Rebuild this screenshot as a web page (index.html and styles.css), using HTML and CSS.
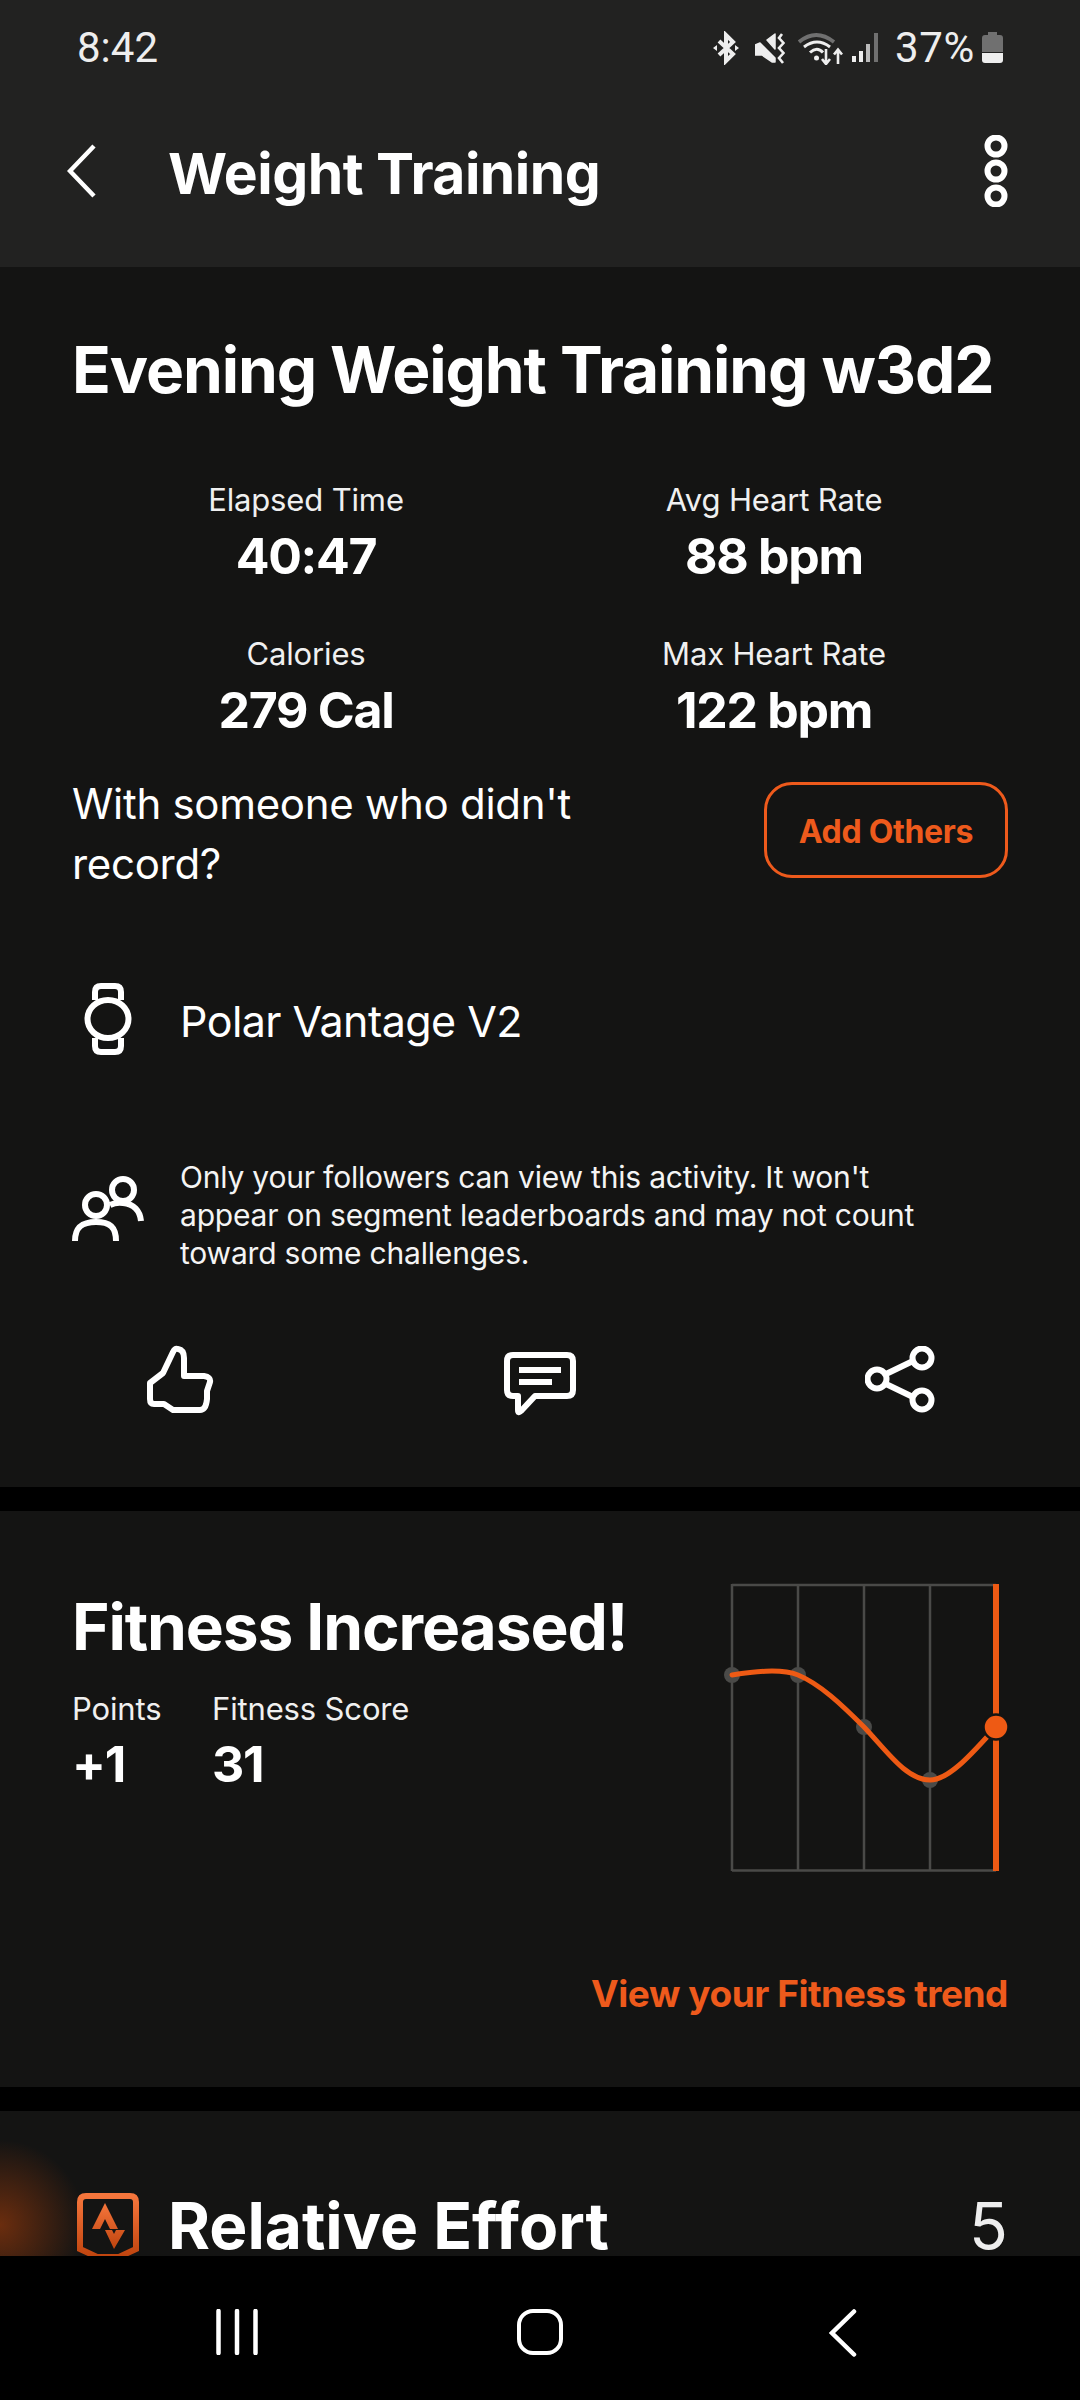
FILE: index.html
```html
<!DOCTYPE html>
<html lang="en">
<head>
<meta charset="utf-8">
<title>Weight Training</title>
<link rel="stylesheet" href="styles.css">
</head>
<body>
<div class="screen">
  <div class="scroll">
    <header class="appbar">
      <div class="status">
        <span class="clock">8:42</span>
        <div class="status-right">
          <svg class="si si-bt" width="26" height="34" viewBox="0 0 26 34"><path d="M6 10 L20 23 L13 30 V4 L20 11 L6 24" fill="none" stroke="#eee" stroke-width="4"/><path d="M0 17 L4 14 V20Z M26 17 L22 14 V20Z" fill="#eee"/></svg>
          <svg class="si si-mute" width="30" height="34" viewBox="0 0 30 34"><path d="M12 9 L20 3 V18Z M0 14 L5 12 L20 27 V31 H17 L7 24 H0Z" fill="#eee" stroke="#eee" stroke-width="1.5" stroke-linejoin="round"/><path d="M27 3 L24 7 L28.5 12 L24 17 L28.5 22 L24 27 L28 32" fill="none" stroke="#eee" stroke-width="2.6"/></svg>
          <svg class="si si-wifi" width="45" height="34" viewBox="0 0 45 34"><path d="M1 11 Q18 -3 36 11" fill="none" stroke="#707070" stroke-width="3.8"/><path d="M6 16 Q19 6 32 16 M12 21.5 Q19 15 25 21.5" fill="none" stroke="#eee" stroke-width="3"/><circle cx="18.5" cy="27" r="2.5" fill="#eee"/><path d="M28 18 V32 M24 28 L28 33 L32 28 M40 33 V19 M36 23.5 L40 18.5 L44 23.5" fill="none" stroke="#eee" stroke-width="2.6"/></svg>
          <svg class="si si-signal" width="27" height="34" viewBox="0 0 27 34"><rect x="0" y="25" width="4" height="6" fill="#eee"/><rect x="7" y="20" width="4" height="11" fill="#eee"/><rect x="14" y="13" width="4" height="18" fill="#bbb"/><rect x="22" y="2" width="4" height="29" fill="#707070"/></svg>
          <span class="batt-text">37%</span>
          <svg class="si si-batt" width="21" height="34" viewBox="0 0 21 34"><path d="M6 1 H15 V4 H18 Q21 4 21 7 V21 H0 V7 Q0 4 3 4 H6Z" fill="#707070"/><path d="M0 22 H21 V29 Q21 32 18 32 H3 Q0 32 0 29Z" fill="#eee"/></svg>
        </div>
      </div>
      <div class="titlebar">
        <svg class="back" width="29" height="54" viewBox="0 0 29 54"><path d="M27 2 L3 27 L27 52" fill="none" stroke="#fff" stroke-width="4.5"/></svg>
        <h1 class="app-title">Weight Training</h1>
        <svg class="more" width="24" height="72" viewBox="0 0 24 72"><g fill="none" stroke="#fff" stroke-width="6"><circle cx="12" cy="11" r="8.5"/><circle cx="12" cy="36" r="8.5"/><circle cx="12" cy="61" r="8.5"/></g></svg>
      </div>
    </header>

    <section class="card card-activity">
      <h2 class="big-title">Evening Weight Training w3d2</h2>
      <div class="stats">
        <div class="stat"><div class="label">Elapsed Time</div><div class="value">40:47</div></div>
        <div class="stat"><div class="label">Avg Heart Rate</div><div class="value">88 bpm</div></div>
        <div class="stat"><div class="label">Calories</div><div class="value">279 Cal</div></div>
        <div class="stat"><div class="label">Max Heart Rate</div><div class="value">122 bpm</div></div>
      </div>
      <div class="others">
        <p class="others-text">With someone who didn't<br>record?</p>
        <button class="others-btn">Add Others</button>
      </div>
      <div class="device">
        <div class="icon-col">
          <svg width="48" height="72" viewBox="0 0 48 72"><g fill="none" stroke="#fff" stroke-width="6"><ellipse cx="24" cy="36" rx="20.5" ry="19"/><path d="M11 17 V9 Q11 3 17 3 H31 Q37 3 37 9 V17"/><path d="M11 55 V63 Q11 69 17 69 H31 Q37 69 37 63 V55"/></g></svg>
        </div>
        <span class="device-name">Polar Vantage V2</span>
      </div>
      <div class="privacy">
        <div class="icon-col icon-col-people">
          <svg width="72" height="65" viewBox="0 0 72 65"><g fill="none" stroke="#fff" stroke-width="6"><circle cx="24" cy="29" r="11"/><circle cx="51" cy="14" r="11"/><path d="M3 65 C3 51 10 46 24 46 C38 46 44 51 44 65"/><path d="M38 29 Q44 26 51 27 C62 28 68 35 69 45"/></g></svg>
        </div>
        <p class="privacy-text">Only your followers can view this activity. It won't appear on segment leaderboards and may not count toward some challenges.</p>
      </div>
      <div class="actions">
        <svg width="68" height="70" viewBox="26 24 68 70"><path d="M30 62 L43 52 L53 31 Q55 27 58 28 Q64 29 64 37 V55 H84 Q91 56 90 61 L87 70 V78 Q86 89 80 89 H53 L44 83 H34 Q30 83 30 78Z" fill="none" stroke="#fff" stroke-width="6" stroke-linejoin="round"/></svg>
        <svg class="comment-icon" width="72" height="64" viewBox="0 0 72 64"><path d="M9 3 H63 Q69 3 69 9 V38 Q69 44 63 44 H31 L17 59 Q14 62 14 58 V44 H9 Q3 44 3 38 V9 Q3 3 9 3Z" fill="none" stroke="#fff" stroke-width="6" stroke-linejoin="round"/><rect x="15" y="15" width="42" height="6" fill="#fff"/><rect x="15" y="27" width="33" height="6" fill="#fff"/></svg>
        <svg width="70" height="67" viewBox="864 1347 70 67"><g fill="none" stroke="#fff" stroke-width="6"><circle cx="921" cy="1359" r="9.5"/><circle cx="921" cy="1401" r="9.5"/><circle cx="876" cy="1380" r="9.5"/><path d="M885 1375 L912 1362 M885 1385 L912 1398"/></g></svg>
      </div>
    </section>

    <section class="card card-fitness">
      <div class="fitness-top">
        <div class="fitness-left">
          <h2 class="big-title">Fitness Increased!</h2>
          <div class="fit-stats">
            <div><div class="label">Points</div><div class="value">+1</div></div>
            <div><div class="label">Fitness Score</div><div class="value">31</div></div>
          </div>
        </div>
        <svg class="chart" width="288" height="288" viewBox="720 1584 288 288">
          <g fill="none" stroke="#4a4a48" stroke-width="2.5">
            <path d="M732 1585 H996 M732 1870.5 H996 M732 1584 V1871 M798 1584 V1871 M864 1584 V1871 M930 1584 V1871"/>
          </g>
          <g fill="#4a4a48"><circle cx="732" cy="1675" r="8"/><circle cx="798" cy="1675" r="8"/><circle cx="864" cy="1727" r="8"/><circle cx="930" cy="1780" r="8"/></g>
          <path d="M996 1584 V1871" stroke="#ee5a14" stroke-width="6"/>
          <path d="M732 1675 C752 1672 780 1668 798 1675 C820 1684 842 1705 864 1727 C886 1750 906 1780 930 1780 C950 1780 975 1750 996 1727" fill="none" stroke="#ee5a14" stroke-width="5" stroke-linecap="round"/>
          <circle cx="996" cy="1727" r="12.5" fill="#ee5a14" stroke="#141413" stroke-width="2.5"/>
        </svg>
      </div>
      <a class="trend-link">View your Fitness trend</a>
    </section>

    <section class="card card-effort">
      <svg class="effort-logo" width="62" height="72" viewBox="0 0 62 72">
        <defs><linearGradient id="eg" x1="0" y1="0" x2="0" y2="1"><stop offset="0" stop-color="#f6763c"/><stop offset="1" stop-color="#bf440e"/></linearGradient></defs>
        <path d="M9 3 H53 Q59 3 59 9 V56 L42 64 H20 L3 56 V9 Q3 3 9 3Z" fill="none" stroke="url(#eg)" stroke-width="6"/>
        <path d="M28 10 L15 36 H23 L28 26 L33 36 H41Z M28 37 H35 L37 41 L39 37 H48 L37 56Z" fill="url(#eg)"/>
      </svg>
      <h2 class="big-title effort-title">Relative Effort</h2>
      <span class="effort-num">5</span>
    </section>
  </div>

  <nav class="navbar">
    <svg width="42" height="46" viewBox="0 0 42 46"><path d="M2.5 2 V44 M21 2 V44 M39.5 2 V44" stroke="#fff" stroke-width="4.5" stroke-linecap="round"/></svg>
    <svg width="46" height="46" viewBox="0 0 46 46"><rect x="2" y="2" width="42" height="42" rx="14" fill="none" stroke="#fff" stroke-width="4"/></svg>
    <svg width="28" height="48" viewBox="0 0 28 48"><path d="M25 2.5 L3 24 L25 45.5" fill="none" stroke="#fff" stroke-width="4.5" stroke-linecap="round"/></svg>
  </nav>
</div>
</body>
</html>
```
FILE: styles.css
```css
* { box-sizing: border-box; }
html, body { margin: 0; padding: 0; background: #000; }
body { font-family: Inter, "Liberation Sans", sans-serif; color: #fff; }
h1, h2, p { margin: 0; }

.screen { width: 1080px; height: 2400px; display: flex; flex-direction: column; overflow: hidden; background: #000; }
.scroll { height: 2256px; overflow: hidden; display: flex; flex-direction: column; flex: none; }

.appbar { height: 267px; flex: none; background: #222221; padding-top: 25px; }
.status { display: flex; justify-content: space-between; align-items: center; height: 46px; padding: 0 77px 0 77px; color: #eee; font-family: Roboto, "Liberation Sans", sans-serif; font-size: 42px; line-height: 46px; }
.status-right { display: flex; align-items: center; }
.si { display: block; }
.si-mute { margin-left: 16px; }
.si-wifi { margin-left: 13px; }
.si-signal { margin-left: 9px; }
.batt-text { margin-left: 16px; letter-spacing: 0.7px; }
.si-batt { margin-left: 7px; }
.titlebar { display: flex; align-items: center; height: 72px; margin-top: 64px; padding: 0 72px 0 67px; }
.back { flex: none; }
.app-title { font-size: 57px; line-height: 68px; font-weight: 700; letter-spacing: -0.5px; margin-left: 72px; padding-top: 6px; flex: 1; }
.more { flex: none; }

.card { background: #141413; padding: 0 72px; flex: none; }
.card-activity { height: 1220px; padding-top: 65px; }
.big-title { font-size: 64px; line-height: 76px; font-weight: 700; letter-spacing: -1.1px; white-space: nowrap; }

.stats { display: grid; grid-template-columns: 468px 468px; row-gap: 48.5px; margin-top: 72.5px; text-align: center; }
.label { font-size: 31px; line-height: 38px; letter-spacing: -0.15px; color: #f0f0f0; }
.value { font-size: 50px; line-height: 60px; font-weight: 700; letter-spacing: -1.3px; margin-top: 7.5px; }

.others { display: flex; justify-content: space-between; align-items: flex-start; margin-top: 33.5px; }
.others-text { font-size: 42px; line-height: 60px; letter-spacing: -0.3px; }
.others-btn { width: 244px; height: 96px; margin-top: 8.5px; padding: 3px 0 0; background: transparent; border: 3px solid #ee5a1c; border-radius: 28px; color: #ee5a1c; font: 700 32px Inter, "Liberation Sans", sans-serif; letter-spacing: -0.3px; }

.device { display: flex; align-items: center; margin-top: 89.5px; height: 72px; gap: 36px; }
.icon-col { width: 72px; flex: none; display: flex; justify-content: center; }
.device-name { font-size: 43px; line-height: 52px; letter-spacing: -0.55px; padding-top: 3px; }

.privacy { display: flex; align-items: flex-start; margin-top: 102.5px; gap: 36px; }
.icon-col-people { margin-top: 18.5px; }
.privacy-text { font-size: 30px; line-height: 38px; letter-spacing: -0.2px; width: 770px; color: #f4f4f4; }

.actions { display: grid; grid-template-columns: repeat(3, 360px); justify-items: center; align-items: center; margin: 71.5px -72px 0; height: 72px; }
.comment-icon { margin-top: 9px; }

.card-fitness { height: 576px; margin-top: 24px; padding-top: 73px; }
.fitness-top { display: flex; justify-content: space-between; align-items: flex-start; }
.fitness-left { padding-top: 5px; }
.fit-stats { display: grid; grid-template-columns: 140px auto; margin-top: 24.5px; }
.fit-stats .value { margin-top: 6.5px; }
.chart { display: block; overflow: visible; flex: none; }
.trend-link { display: block; margin-top: 100px; text-align: right; font-size: 37px; line-height: 44px; font-weight: 700; letter-spacing: -0.45px; color: #ee5a1c; }

.card-effort { margin-top: 24px; flex: 1; padding: 85px 72px 0 77px; display: flex; align-items: flex-start; background: radial-gradient(circle 85px at 0 114px, #6b2d0e, rgba(107,45,14,0)), #141413; }
.effort-logo { flex: none; margin-top: -3px; }
.effort-title { margin-left: 29px; flex: 1; letter-spacing: 0; line-height: 60px; }
.effort-num { font-size: 64px; line-height: 60px; color: #eee; }

.navbar { flex: none; height: 144px; background: #000; display: grid; grid-template-columns: repeat(3, 303px); justify-content: center; justify-items: center; align-items: start; padding-top: 53px; }
```
